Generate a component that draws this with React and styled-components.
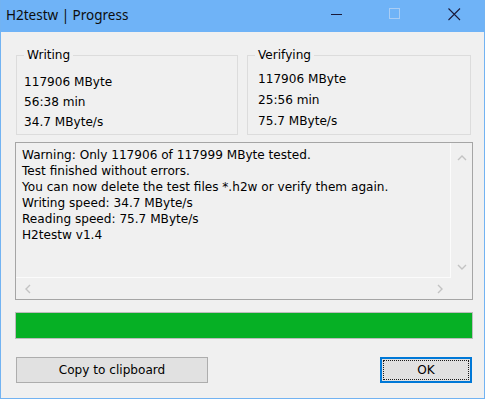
import React from 'react';
import styled, { createGlobalStyle } from 'styled-components';

const Global = createGlobalStyle`
  html, body {
    margin: 0;
    padding: 0;
    background: #ffffff;
  }
`;

const writing = ['117906 MByte', '56:38 min', '34.7 MByte/s'];
const verifying = ['117906 MByte', '25:56 min', '75.7 MByte/s'];
const log = [
  'Warning: Only 117906 of 117999 MByte tested.',
  'Test finished without errors.',
  'You can now delete the test files *.h2w or verify them again.',
  'Writing speed: 34.7 MByte/s',
  'Reading speed: 75.7 MByte/s',
  'H2testw v1.4',
];

const Chevron = ({ dir }) => {
  const paths = {
    up: 'M1 6 L5 2 L9 6',
    down: 'M1 2 L5 6 L9 2',
    left: 'M6 1 L2 5 L6 9',
    right: 'M2 1 L6 5 L2 9',
  };
  const vertical = dir === 'up' || dir === 'down';
  return (
    <svg width={vertical ? 10 : 8} height={vertical ? 8 : 10} viewBox={vertical ? '0 0 10 8' : '0 0 8 10'}>
      <path d={paths[dir]} fill="none" stroke="#c3c3c3" strokeWidth="1.4" />
    </svg>
  );
};

const App = () => {
  return (
    <>
      <Global />
      <Window>
        <TitleBar>
          <Title>H2testw | Progress</Title>
          <Controls>
            <ControlButton>
              <svg width="12" height="10" viewBox="0 0 12 10">
                <path d="M0 5.5 H11" stroke="#1a1a3a" strokeWidth="1" />
              </svg>
            </ControlButton>
            <ControlButton>
              <svg width="12" height="12" viewBox="0 0 12 12">
                <rect x="0.5" y="0.5" width="10" height="10" fill="none" stroke="#a9cdf4" strokeWidth="1" />
              </svg>
            </ControlButton>
            <ControlButton $close>
              <svg width="13" height="13" viewBox="0 0 13 13">
                <path d="M0.5 0.5 L12 12 M12 0.5 L0.5 12" stroke="#1a1a3a" strokeWidth="1.1" />
              </svg>
            </ControlButton>
          </Controls>
        </TitleBar>

        <Client>
          <Groups>
            <GroupBox>
              <Legend>Writing</Legend>
              {writing.map((l) => <Line key={l}>{l}</Line>)}
            </GroupBox>
            <GroupBox $shift>
              <Legend $shift>Verifying</Legend>
              {verifying.map((l) => <Line key={l} $tall>{l}</Line>)}
            </GroupBox>
          </Groups>

          <Memo>
            <MemoText>
              {log.map((l) => <LogLine key={l}>{l}</LogLine>)}
            </MemoText>
            <VScroll>
              <Chevron dir="up" />
              <Chevron dir="down" />
            </VScroll>
            <HScroll>
              <Chevron dir="left" />
              <Chevron dir="right" />
            </HScroll>
            <Corner />
          </Memo>

          <Progress />

          <Buttons>
            <Button>Copy to clipboard</Button>
            <Button $primary>
              <Focus>OK</Focus>
            </Button>
          </Buttons>
        </Client>
      </Window>
    </>
  );
};

export default App;

const Window = styled.div`
  width: 485px;
  height: 399px;
  box-sizing: border-box;
  border: 1px solid #72b3f2;
  border-top: none;
  background: #f0f0f0;
  display: flex;
  flex-direction: column;
  font-family: 'DejaVu Sans', Tahoma, sans-serif;
  color: #000;
`;

const TitleBar = styled.div`
  height: 32px;
  flex: none;
  background: #6fb3f7;
  display: flex;
  align-items: center;
  justify-content: space-between;
  padding-left: 5px;
`;

const Title = styled.div`
  font-family: 'Noto Sans', 'Open Sans', sans-serif;
  font-size: 13.5px;
  color: #0d0d0d;
  margin-top: -2px;
`;

const Controls = styled.div`
  display: flex;
  height: 100%;
`;

const ControlButton = styled.div`
  width: ${({ $close }) => ($close ? '60px' : '58px')};
  height: 100%;
  display: flex;
  align-items: center;
  justify-content: center;
  margin-top: -2px;
`;

const Client = styled.div`
  flex: 1;
  display: flex;
  flex-direction: column;
  padding: 15px 11px 0 14px;
  font-size: 12.1px;
`;

const Groups = styled.div`
  display: grid;
  grid-template-columns: 222px 224px;
  gap: 9px;
  margin-left: 1px;
`;

const GroupBox = styled.fieldset`
  margin: 0;
  min-width: 0;
  border: 1px solid #dcdcdc;
  padding: ${({ $shift }) => ($shift ? '6px 7px 2px 10px' : '9px 7px 2px 7px')};
`;

const Legend = styled.legend`
  padding: 0 3px;
  margin-left: ${({ $shift }) => ($shift ? '-3px' : '0')};
  line-height: 16px;
`;

const Line = styled.div`
  line-height: ${({ $tall }) => ($tall ? '21px' : '20px')};
`;

const Memo = styled.div`
  margin-top: 7px;
  height: 158px;
  box-sizing: border-box;
  border: 1px solid #a5a5a5;
  display: grid;
  grid-template-columns: 1fr 21px;
  grid-template-rows: 1fr 21px;
`;

const MemoText = styled.div`
  padding: 4px 0 0 6px;
  border-right: 1px solid #fbfbfb;
  border-bottom: 1px solid #fbfbfb;
  white-space: nowrap;
  overflow: hidden;
`;

const LogLine = styled.div`
  line-height: 16px;
`;

const VScroll = styled.div`
  display: flex;
  flex-direction: column;
  justify-content: space-between;
  align-items: center;
  padding: 11px 0 7px 0;
`;

const HScroll = styled.div`
  display: flex;
  justify-content: space-between;
  align-items: center;
  padding: 0 7px 0 8px;
`;

const Corner = styled.div``;

const Progress = styled.div`
  margin-top: 12px;
  height: 27px;
  box-sizing: border-box;
  border: 1px solid #bcbcbc;
  background: #06b025;
`;

const Buttons = styled.div`
  margin-top: 18px;
  display: flex;
  justify-content: space-between;
  padding: 0 1px 0 1px;
`;

const Button = styled.div`
  height: 26px;
  box-sizing: border-box;
  width: ${({ $primary }) => ($primary ? '92px' : '192px')};
  background: #e1e1e1;
  border: ${({ $primary }) => ($primary ? '2px solid #0078d7' : '1px solid #adadad')};
  display: flex;
  align-items: center;
  justify-content: center;
  padding: ${({ $primary }) => ($primary ? '1px' : '0')};
  font-size: 12.1px;
`;

const Focus = styled.div`
  flex: 1;
  align-self: stretch;
  border: 1px dotted #1a1a1a;
  display: flex;
  align-items: center;
  justify-content: center;
`;
